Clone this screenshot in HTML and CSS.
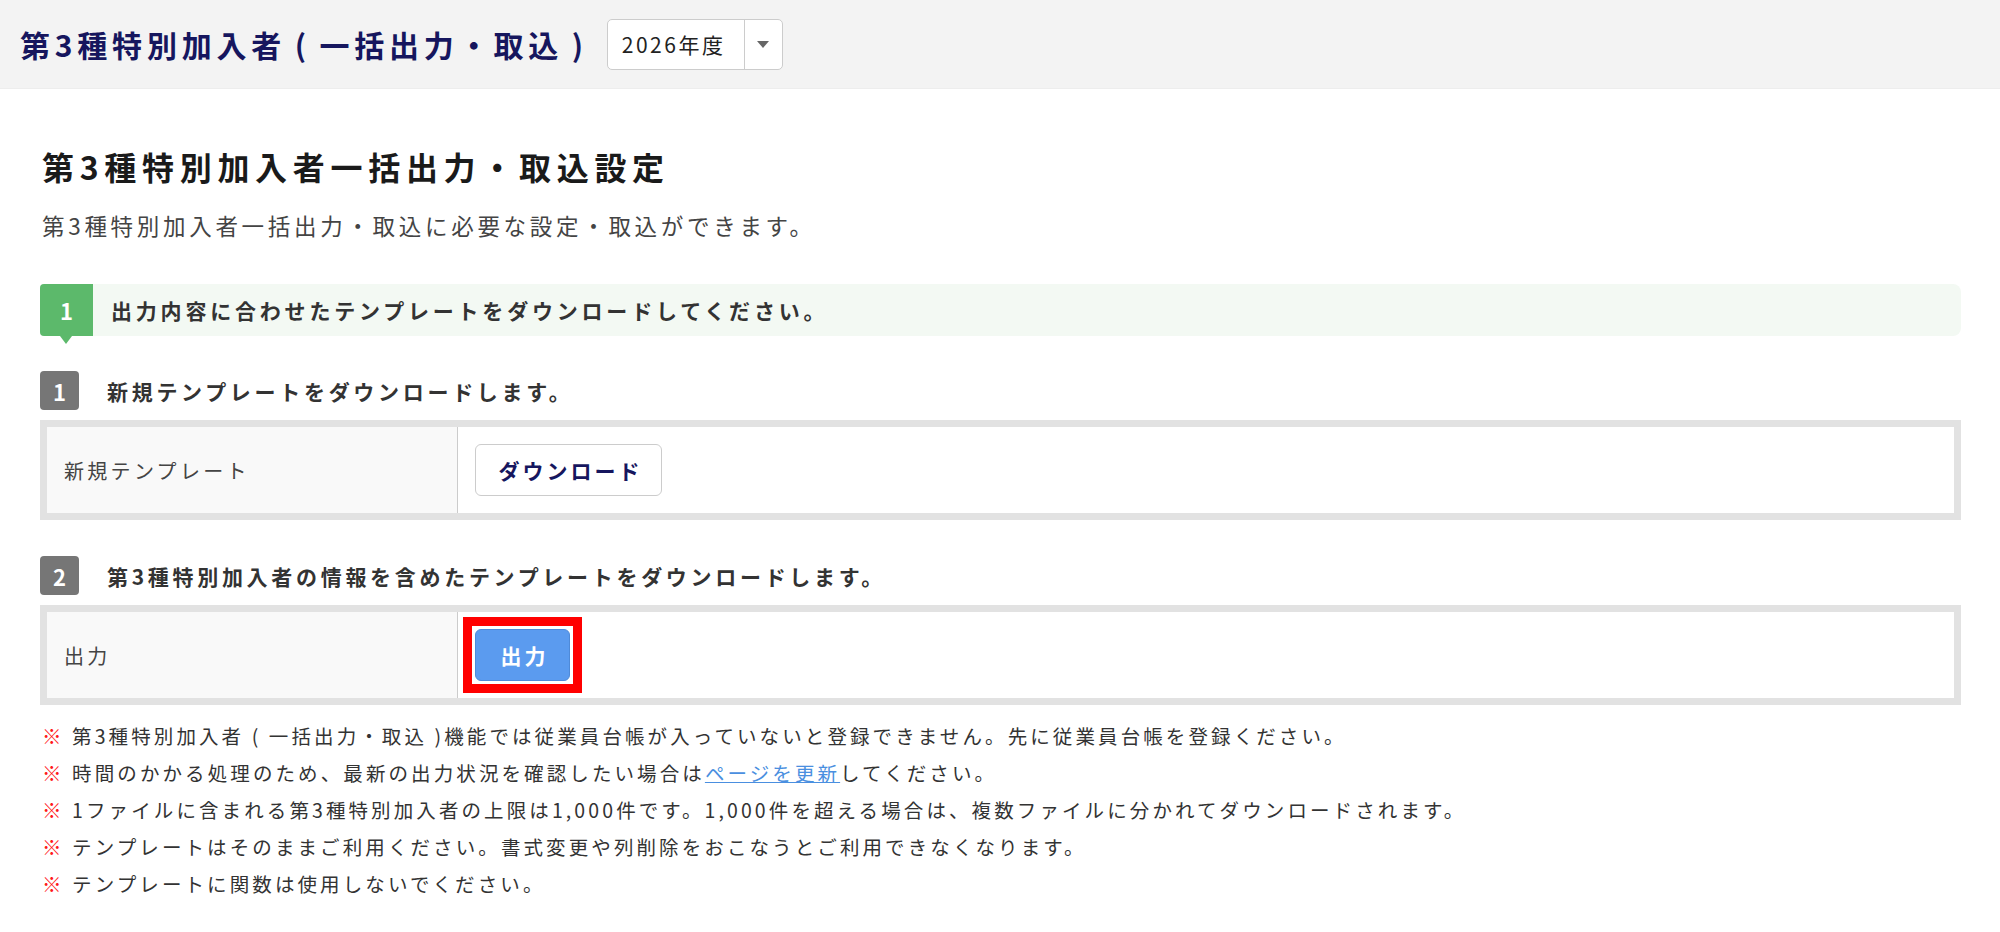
FILE: index.html
```html
<!DOCTYPE html>
<html lang="ja">
<head>
    <meta charset="UTF-8">
    <meta name="viewport" content="width=device-width, initial-scale=1.0">
    <title>第3種特別加入者 ( 一括出力・取込 )</title>
    <link rel="stylesheet" href="styles.css">
</head>
<body>
    <header class="page-header">
        <h1 class="page-title">第3種特別加入者 ( 一括出力・取込 )</h1>
        <div class="year-select">
            <span class="year-value">2026年度</span>
            <span class="year-arrow"></span>
        </div>
    </header>

    <main class="content">
        <h2 class="section-title">第3種特別加入者一括出力・取込設定</h2>
        <p class="lead">第3種特別加入者一括出力・取込に必要な設定・取込ができます。</p>

        <div class="step-banner">
            <span class="step-no">1</span>
            <span class="step-text">出力内容に合わせたテンプレートをダウンロードしてください。</span>
        </div>

        <div class="sub-step">
            <span class="sub-no">1</span>
            <span class="sub-text">新規テンプレートをダウンロードします。</span>
        </div>
        <div class="form-table">
            <div class="form-label">新規テンプレート</div>
            <div class="form-value">
                <button class="btn btn-default">ダウンロード</button>
            </div>
        </div>

        <div class="sub-step">
            <span class="sub-no">2</span>
            <span class="sub-text">第3種特別加入者の情報を含めたテンプレートをダウンロードします。</span>
        </div>
        <div class="form-table">
            <div class="form-label">出力</div>
            <div class="form-value">
                <span class="marker"><button class="btn btn-primary">出力</button></span>
            </div>
        </div>

        <ul class="notes">
            <li><span class="mark">※</span> 第3種特別加入者 ( 一括出力・取込 )機能では従業員台帳が入っていないと登録できません。先に従業員台帳を登録ください。</li>
            <li><span class="mark">※</span> 時間のかかる処理のため、最新の出力状況を確認したい場合は<a href="#" class="link">ページを更新</a>してください。</li>
            <li><span class="mark">※</span> 1ファイルに含まれる第3種特別加入者の上限は1,000件です。1,000件を超える場合は、複数ファイルに分かれてダウンロードされます。</li>
            <li><span class="mark">※</span> テンプレートはそのままご利用ください。書式変更や列削除をおこなうとご利用できなくなります。</li>
            <li><span class="mark">※</span> テンプレートに関数は使用しないでください。</li>
        </ul>
    </main>
</body>
</html>
```

FILE: styles.css
```css
body {
    margin: 0;
    font-family: "Noto Sans CJK JP", "Noto Sans", sans-serif;
    color: #333333;
    background: #ffffff;
}

.page-header {
    display: flex;
    align-items: center;
    gap: 19px;
    height: 89px;
    padding: 0 20px;
    background: #f3f3f3;
    border-bottom: 1px solid #ededed;
    box-sizing: border-box;
}

.page-title {
    margin: 0;
    font-size: 30px;
    font-weight: bold;
    color: #16165e;
    letter-spacing: 4.8px;
    word-spacing: -3px;
}

.year-select {
    display: flex;
    align-items: stretch;
    width: 176px;
    height: 51px;
    background: #ffffff;
    border: 1px solid #cccccc;
    border-radius: 5px;
    box-sizing: border-box;
}

.year-value {
    display: flex;
    align-items: center;
    width: 137px;
    padding-left: 14px;
    font-size: 21px;
    letter-spacing: 2.5px;
    color: #222222;
    border-right: 1px solid #cccccc;
    box-sizing: border-box;
}

.year-arrow {
    flex: 1;
    display: flex;
    align-items: center;
    justify-content: center;
}

.year-arrow::before {
    content: "";
    border-left: 6px solid transparent;
    border-right: 6px solid transparent;
    border-top: 7px solid #666666;
}

.content {
    padding: 0 39px 0 40px;
}

.section-title {
    margin: 57px 0 0 2px;
    font-size: 32px;
    line-height: 40px;
    font-weight: bold;
    color: #1a1a1a;
    letter-spacing: 5.7px;
}

.lead {
    margin: 23px 0 0 2px;
    font-size: 22.5px;
    line-height: 32px;
    color: #444444;
    letter-spacing: 3.7px;
}

.step-banner {
    display: flex;
    align-items: center;
    height: 52px;
    margin-top: 43px;
    background: #f3f9f3;
    border-radius: 4px 8px 8px 4px;
}

.step-no {
    position: relative;
    display: flex;
    align-items: center;
    justify-content: center;
    width: 53px;
    height: 52px;
    background: #5cb96b;
    border-radius: 4px 0 0 4px;
    color: #ffffff;
    font-size: 22px;
    font-weight: bold;
}

.step-no::after {
    content: "";
    position: absolute;
    left: 20px;
    bottom: -8px;
    border-left: 6px solid transparent;
    border-right: 6px solid transparent;
    border-top: 8px solid #5cb96b;
}

.step-text {
    margin-left: 18px;
    font-size: 21px;
    font-weight: bold;
    color: #333333;
    letter-spacing: 3.8px;
}

.sub-step {
    display: flex;
    align-items: center;
    height: 39px;
    margin-top: 35px;
}

.form-table + .sub-step {
    margin-top: 36px;
}

.sub-no {
    display: flex;
    align-items: center;
    justify-content: center;
    width: 39px;
    height: 39px;
    background: #767676;
    border-radius: 4px;
    color: #ffffff;
    font-size: 22px;
    font-weight: bold;
}

.sub-text {
    margin-left: 28px;
    font-size: 21px;
    font-weight: bold;
    color: #333333;
    letter-spacing: 3.7px;
}

.form-table {
    display: grid;
    grid-template-columns: 411px 1fr;
    margin-top: 10px;
    border: 7px solid #e2e2e2;
}

.form-label {
    display: flex;
    align-items: center;
    height: 86px;
    padding-left: 17px;
    background: #f9f9f9;
    border-right: 1px solid #cccccc;
    font-size: 20px;
    color: #444444;
    letter-spacing: 3.3px;
}

.form-value {
    display: flex;
    align-items: center;
    padding-left: 17px;
}

.btn {
    height: 52px;
    border-radius: 6px;
    font-family: inherit;
    font-size: 21px;
    font-weight: bold;
    letter-spacing: 3px;
    cursor: pointer;
}

.btn-default {
    width: 187px;
    padding: 0 0 0 4px;
    background: #ffffff;
    border: 1px solid #cccccc;
    color: #16165e;
}

.btn-primary {
    width: 95px;
    padding: 0 0 0 4px;
    background: #5b9bef;
    border: 1px solid #4f8ad8;
    color: #ffffff;
}

/* red annotation frame around the export button */
.marker {
    display: inline-flex;
    margin-left: -12px;
    padding: 3px;
    background: #ffffff;
    border: 9px solid #ff0000;
}

.notes {
    list-style: none;
    margin: 12px 0 0 2px;
    padding: 0;
    font-size: 19.5px;
    line-height: 37px;
    color: #333333;
    letter-spacing: 3.1px;
}

.mark {
    color: #ff1a1a;
    font-weight: bold;
}

.link {
    color: #4a8fe0;
    text-decoration: underline;
}
```
